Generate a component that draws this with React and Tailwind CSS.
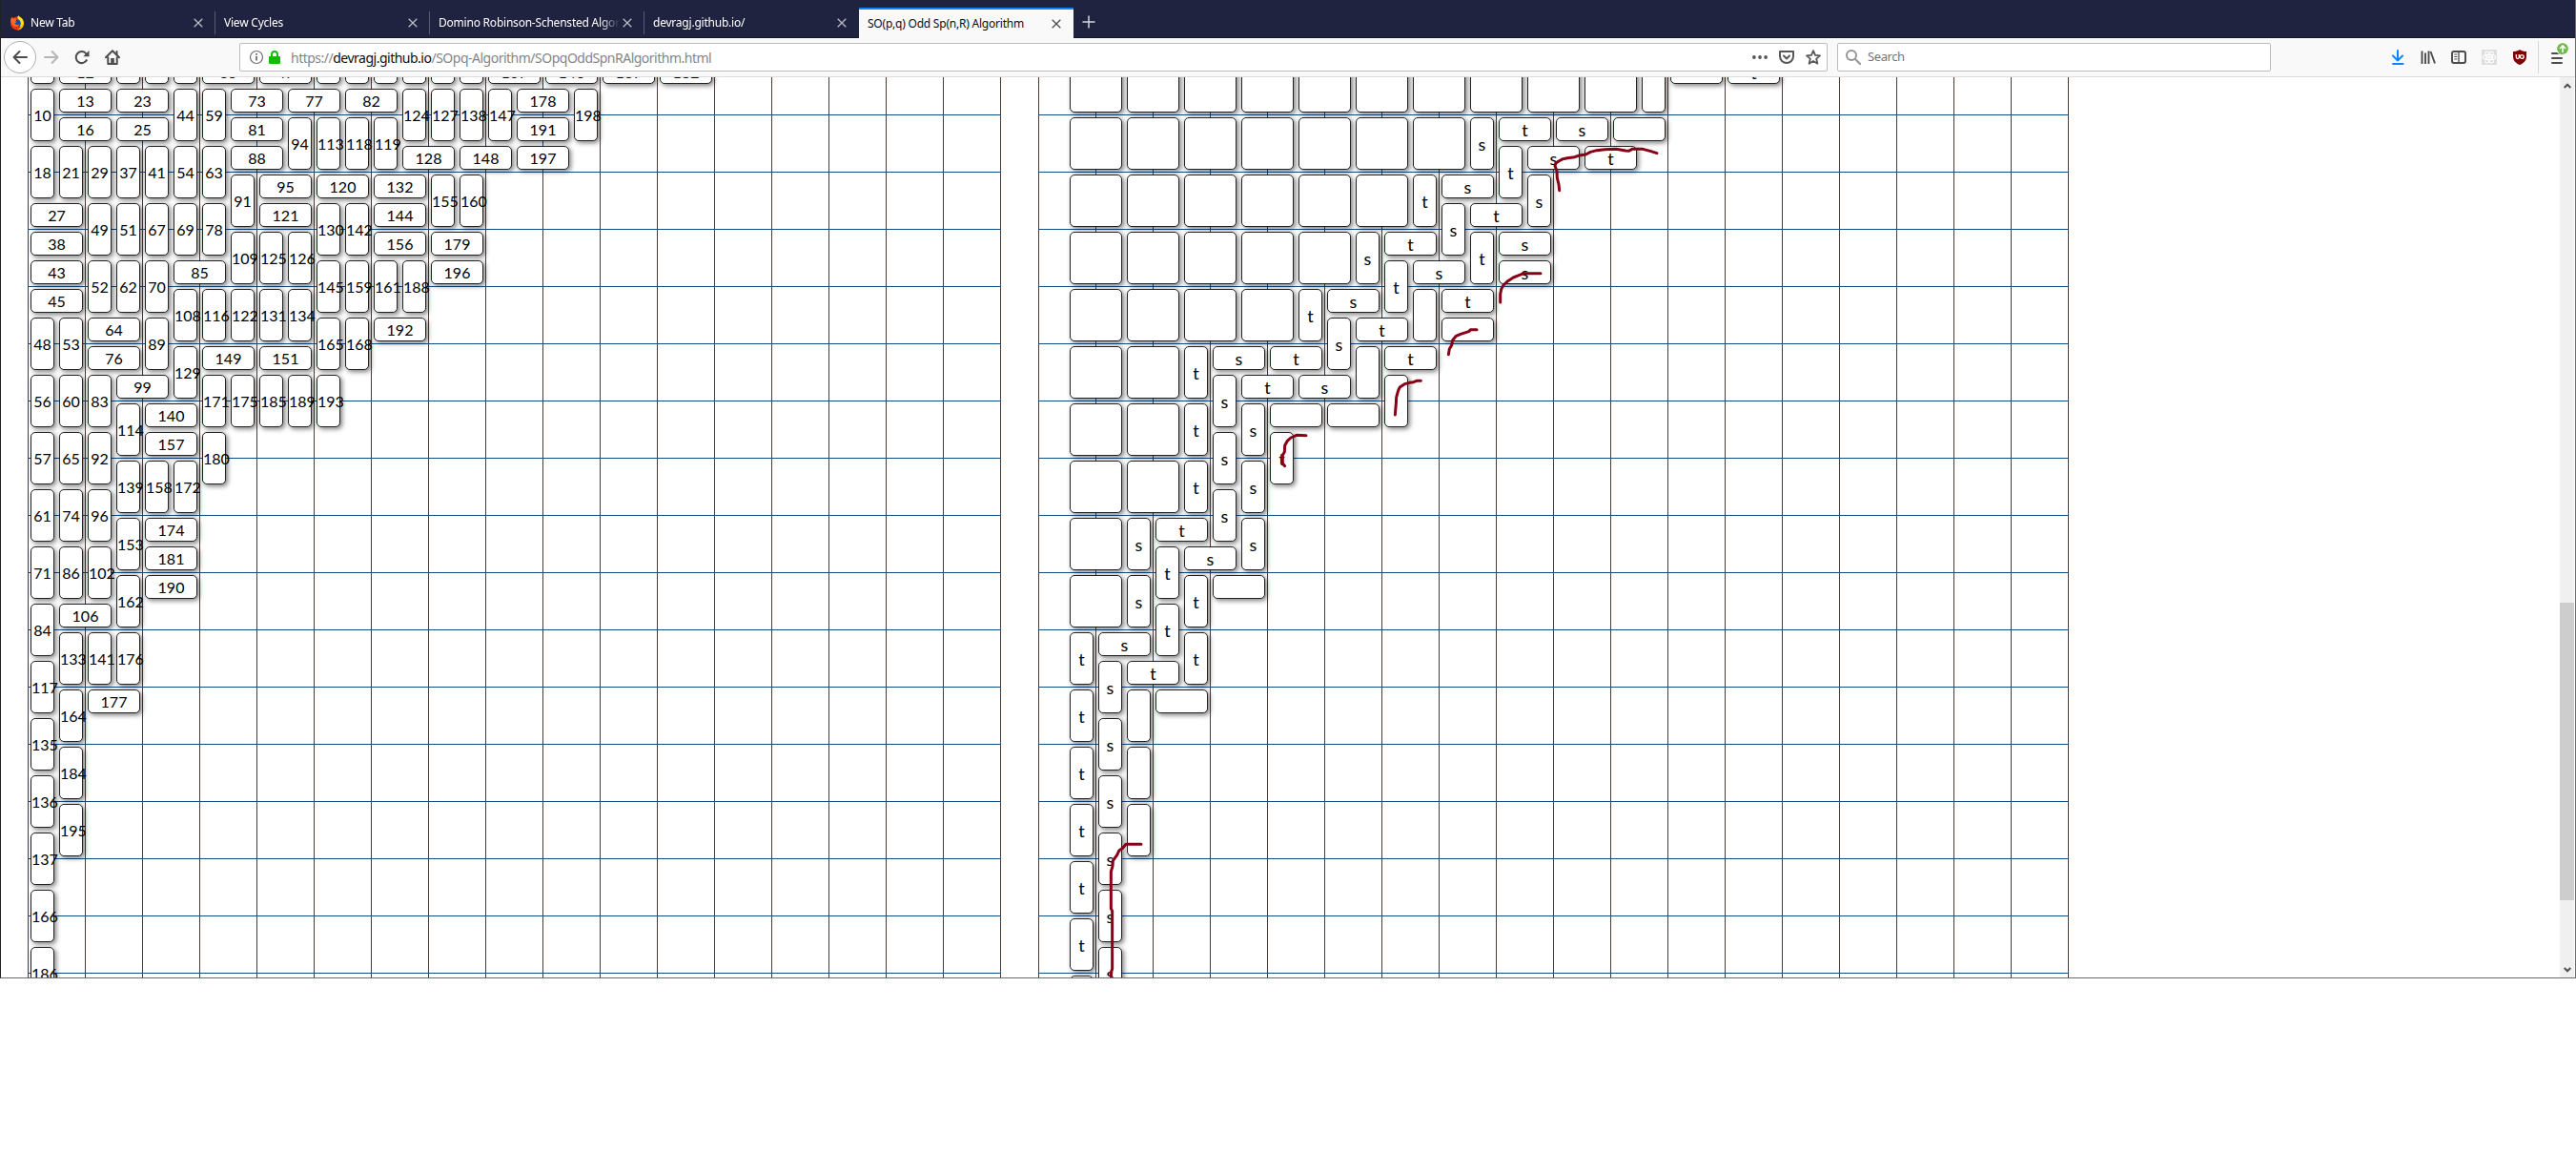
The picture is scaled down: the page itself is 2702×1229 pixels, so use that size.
import React from "react";

// Each tile is written "label,column,row"; rows and columns are in half-cell units.
const leftUpright = `,0,-2 ,3,-2 ,4,-2 ,5,-2 ,10,-2 ,11,-2 ,12,-2 ,13,-2 ,14,-2 ,15,-2
10,0,0 44,5,0 59,6,0 124,13,0 127,14,0 138,15,0 147,16,0 198,19,0
94,9,1 113,10,1 118,11,1 119,12,1
18,0,2 21,1,2 29,2,2 37,3,2 41,4,2 54,5,2 63,6,2
91,7,3 155,14,3 160,15,3
49,2,4 51,3,4 67,4,4 69,5,4 78,6,4 130,10,4 142,11,4
109,7,5 125,8,5 126,9,5
52,2,6 62,3,6 70,4,6 145,10,6 159,11,6 161,12,6 188,13,6
108,5,7 116,6,7 122,7,7 131,8,7 134,9,7
48,0,8 53,1,8 89,4,8 165,10,8 168,11,8 129,5,9
56,0,10 60,1,10 83,2,10 171,6,10 175,7,10 185,8,10 189,9,10 193,10,10
114,3,11 57,0,12 65,1,12 92,2,12 180,6,12
139,3,13 158,4,13 172,5,13 61,0,14 74,1,14 96,2,14 153,3,15
71,0,16 86,1,16 102,2,16 162,3,17 84,0,18
133,1,19 141,2,19 176,3,19 117,0,20 164,1,21 135,0,22 184,1,23
136,0,24 195,1,25 137,0,26 166,0,28 186,0,30`;

const leftFlat = `12,1,-1 35,6,-1 47,8,-1 107,16,-1 146,18,-1 167,20,-1 182,22,-1
13,1,0 23,3,0 73,7,0 77,9,0 82,11,0 178,17,0
16,1,1 25,3,1 81,7,1 191,17,1 88,7,2 128,13,2 148,15,2 197,17,2
95,8,3 120,10,3 132,12,3 27,0,4 121,8,4 144,12,4
38,0,5 156,12,5 179,14,5 43,0,6 85,5,6 196,14,6 45,0,7
64,2,8 192,12,8 76,2,9 149,6,9 151,8,9 99,3,10 140,4,11 157,4,12
174,4,15 181,4,16 190,4,17 106,1,18 177,2,21`;

const rightSquare = `,0,-1 ,2,-1 ,4,-1 ,6,-1 ,8,-1 ,10,-1 ,12,-1 ,14,-1 ,16,-1 ,18,-1
,0,1 ,2,1 ,4,1 ,6,1 ,8,1 ,10,1 ,12,1
,0,3 ,2,3 ,4,3 ,6,3 ,8,3 ,10,3
,0,5 ,2,5 ,4,5 ,6,5 ,8,5 ,0,7 ,2,7 ,4,7 ,6,7
,0,9 ,2,9 ,0,11 ,2,11 ,0,13 ,2,13 ,0,15 ,0,17`;

const rightUpright = `,20,-1 s,14,1 t,15,2 t,12,3 s,16,3 s,13,4 s,10,5 t,14,5 t,11,6
t,8,7 ,12,7 s,9,8 t,4,9 ,10,9 s,5,10 ,11,10 t,4,11 s,6,11 s,5,12 t,7,12
t,4,13 s,6,13 s,5,14 s,2,15 s,6,15 t,3,16 s,2,17 t,4,17 t,3,18
t,0,19 t,4,19 s,1,20 t,0,21 ,2,21 s,1,22 t,0,23 ,2,23 s,1,24 t,0,25 ,2,25
s,1,26 t,0,27 s,1,28 t,0,29 s,1,30 t,0,31`;

const rightFlat = `,21,-1 t,23,-1 t,15,1 s,17,1 ,19,1 s,16,2 t,18,2 s,13,3 t,14,4
t,11,5 s,15,5 s,12,6 s,15,6 s,9,7 t,13,7 t,10,8 ,13,8
s,5,9 t,7,9 t,11,9 t,6,10 s,8,10 ,7,11 ,9,11 t,3,15 s,4,16 ,5,17
s,1,19 t,2,20 ,3,21`;

const parse = (text, w, h) =>
  text.trim().split(/\s+/).map((item) => {
    const [label, c, r] = item.split(",");
    return { label, c: Number(c), r: Number(r), w, h };
  });

const leftTiles = [...parse(leftUpright, 1, 2), ...parse(leftFlat, 2, 1)];
const rightTiles = [
  ...parse(rightSquare, 2, 2),
  ...parse(rightUpright, 1, 2),
  ...parse(rightFlat, 2, 1),
];

function Board({ tiles, firstColumn, className }) {
  return (
    <div
      className={
        "-mt-[81px] grid h-[1110px] shrink-0 auto-cols-[30px] auto-rows-[30px] grid-cols-[repeat(34,30px)] grid-rows-[repeat(37,30px)] bg-[linear-gradient(#0f4c8c_1px,transparent_0),linear-gradient(90deg,#0f4c8c_1px,transparent_0)] bg-size-[60px_60px] " +
        className
      }
    >
      {tiles.map((t) => (
        <div
          key={t.c + "-" + t.r}
          className="mt-[3px] mr-[2px] mb-[2px] ml-[3px] flex items-center rounded-[5px] border border-[#222] bg-white shadow-[2px_2px_5px_rgba(0,0,0,0.5)]"
          style={{
            gridColumn: `${t.c + firstColumn} / span ${t.w}`,
            gridRow: `${t.r + 4} / span ${t.h}`,
          }}
        >
          <span className="mx-auto pt-px leading-[22px]">{t.label}</span>
        </div>
      ))}
    </div>
  );
}

function CloseIcon({ className }) {
  return (
    <svg viewBox="0 0 10 10" className={"size-2.5 shrink-0 " + className} fill="none" stroke="currentColor" strokeWidth="1.3">
      <path d="M.7.7l8.6 8.6M9.3.7L.7 9.3" />
    </svg>
  );
}

function FirefoxIcon() {
  return (
    <svg viewBox="0 0 16 16" className="mr-[6px] size-4 shrink-0">
      <circle cx="8" cy="8.6" r="7" fill="#e8311d" />
      <path d="M8 1.2c5 .2 7.4 4 7 7.8-.4 4-3.4 6.4-6.8 6.6 3-1.800 4.300-4.200 3.800-7.300C11.500 5.500 9.500 4 9 3.500z" fill="#ffb400" />
      <path d="M9.600 0c.2 2 5.400 3 4.700 9.300-.8 1.500-2 2.500-3.300 2.900 1.500-3.600.2-6-2.200-7.600C8.500 3 8.800 1 9.600 0z" fill="#ffe226" />
      <circle cx="7.700" cy="8.200" r="3.900" fill="#1b49a8" />
      <path d="M1.200 4.500l1.200-2.700 1.500 1.700c1.200-.4 2.700 0 3.600 1L6.300 6 7.200 7.300 5.400 8.300C6 10 8.300 10.600 10.600 9.500 9.500 12.500 5 13 3 10.200 1.700 8.500 1 6.500 1.200 4.500z" fill="#ff6a1a" />
    </svg>
  );
}

function Tab({ title, icon, divider }) {
  return (
    <div className="relative flex h-[31px] w-[225px] shrink-0 items-center pr-[13px] pl-[9px] text-white">
      {divider && <i className="absolute top-[4px] left-[-1px] h-6 w-px bg-[#5a5c72]" />}
      {icon}
      <span className="flex-1 overflow-hidden whitespace-nowrap [mask-image:linear-gradient(90deg,#000_calc(100%-20px),transparent)]">{title}</span>
      <CloseIcon className="ml-[3px] text-[#b9bac5]" />
    </div>
  );
}

const scrawl = [
  ["translate(1450 70) scale(.33333)", "M557 389L555 370 550 350 549 328 543 312 546 303 555 297 568 290 582 287 605 284 620 279 640 276 655 268 675 263 700 260 735 259 765 264 775 265 786 259 820 259 845 266 864 272"],
  ["translate(1450 70) scale(.33333)", "M371 741L371 715 374 700 381 687 395 674 412 663 430 656 445 650 498 650"],
  ["translate(1450 70) scale(.33333)", "M208 905L211 888 218 876 221 860 232 847 246 841 272 833 278 827 297 827"],
  ["translate(1450 70) scale(.33333)", "M40 1095L43 1060 44 1040 50 1018 55 1008 70 998 85 994 98 992 108 988 121 988"],
  ["translate(1080 70) scale(.33333)", "M803 1256L796 1248 796 1222 802 1212 803 1192 811 1177 822 1167 840 1159 870 1160"],
  ["translate(1080 560) scale(.33333)", "M351 976L303 976 293 988 282 995 275 1010 262 1028 261 1045 256 1062 256 1178 260 1186 260 1368 256 1380 257 1394"],
];

export default function App() {
  return (
    <div className="h-[1229px] w-[2702px] overflow-hidden bg-white">
      <div className="relative flex h-[1026px] flex-col border-r border-b border-l border-r-[#6b6b6b] border-b-[#6b6b6b] border-l-[#222] bg-white font-['Noto_Sans','Open_Sans',sans-serif]">
        <header className="flex h-10 shrink-0 items-end border-b border-[#15172f] bg-[#202340] text-[12px] tracking-[-0.22px]">
          <Tab title="New Tab" icon={<FirefoxIcon />} />
          <Tab title="View Cycles" divider />
          <Tab title="Domino Robinson-Schensted Algorithm" divider />
          <Tab title="devragj.github.io/" divider />
          <div className="-mb-px flex h-8 w-[225px] shrink-0 items-center border-t-2 border-[#0a84ff] bg-[#f9f9fa] pr-[13px] pl-[9px] text-[#0c0c0d]">
            <span className="flex-1 whitespace-nowrap">SO(p,q) Odd Sp(n,R) Algorithm</span>
            <CloseIcon className="text-[#4a4a4f]" />
          </div>
          <svg viewBox="0 0 14 14" className="mb-[9px] ml-[9px] size-3.5" stroke="#d5d5da" strokeWidth="1.500">
            <path d="M7 .5v13M.5 7h13" />
          </svg>
        </header>

        <div className="flex h-[41px] shrink-0 items-center border-b border-[#dcdcdc] bg-[#f9f9fa] text-[#4c4c4f]">
          <div className="ml-[3px] flex size-[34px] items-center justify-center rounded-full border border-[#b1b1b3] bg-white">
            <svg viewBox="0 0 16 16" className="size-4" fill="none" stroke="currentColor" strokeWidth="2" strokeLinecap="round" strokeLinejoin="round">
              <path d="M15 8H1.500M7.500 2L1.500 8l6 6" />
            </svg>
          </div>
          <svg viewBox="0 0 16 16" className="ml-2 size-4" fill="none" stroke="#b6b6b8" strokeWidth="2" strokeLinecap="round" strokeLinejoin="round">
            <path d="M1 8h13.500M8.500 2l6 6-6 6" />
          </svg>
          <svg viewBox="0 0 16 16" className="ml-4 size-4" fill="none" stroke="currentColor" strokeWidth="2">
            <path d="M13.200 10.500A6 6 0 1 1 12.500 4.500" />
            <path d="M15.500 1v6.200H9.300z" fill="currentColor" stroke="none" />
          </svg>
          <svg viewBox="0 0 16 16" className="ml-4 size-4" fill="none" stroke="currentColor" strokeWidth="2" strokeLinejoin="round" strokeLinecap="round">
            <path d="M1 8.300l7-7 7 7M3.300 8.500V15h9.400V8.500" />
            <path d="M12.500 2v3" />
            <path d="M6.200 9h3.600v6H6.200z" fill="currentColor" stroke="none" />
          </svg>

          <div className="ml-[125px] flex h-[30px] w-[1666px] items-center rounded-[2px] border border-[#bcbcbc] bg-white pr-[6px] pl-[9px] text-[14px]">
            <svg viewBox="0 0 16 16" className="size-4" fill="none" stroke="#6f6f72">
              <circle cx="8" cy="8" r="6.500" strokeWidth="1.200" />
              <path d="M8 7v4.500M8 4v1.700" strokeWidth="1.800" />
            </svg>
            <svg viewBox="0 0 12 14" className="ml-[5px] h-3.5 w-3">
              <path d="M3 7V4a3 3 0 0 1 6 0v3" fill="none" stroke="#12bc00" strokeWidth="2" />
              <rect y="6" width="12" height="8" rx="1" fill="#12bc00" />
            </svg>
            <span className="ml-[11px] w-[442px] pt-px whitespace-nowrap tracking-[-0.5px] text-[#858588]">
              https://<span className="text-[#0c0c0d]">devragj.github.io</span>/SOpq-Algorithm/SOpqOddSpnRAlgorithm.html
            </span>
            <div className="ml-auto flex items-center gap-3 text-[#58585b]">
              <svg viewBox="0 0 16 16" className="size-4" fill="currentColor">
                <circle cx="1.900" cy="8" r="1.900" /><circle cx="8" cy="8" r="1.900" /><circle cx="14.100" cy="8" r="1.900" />
              </svg>
              <svg viewBox="0 0 16 16" className="size-4" fill="none" stroke="currentColor" strokeWidth="2" strokeLinecap="round" strokeLinejoin="round">
                <path d="M1 2h14v5a7 7 0 0 1-14 0z" /><path d="M5 6.500l3 3 3-3" />
              </svg>
              <svg viewBox="0 0 16 16" className="size-4" fill="none" stroke="currentColor" strokeWidth="1.800" strokeLinejoin="round">
                <path d="M8 1.200l2 4.700 5 .4-3.800 3.400 1.200 5L8 12.100l-4.400 2.600 1.200-5L1 6.300l5-.4z" />
              </svg>
            </div>
          </div>

          <div className="ml-[10px] flex h-[30px] w-[455px] items-center rounded-[2px] border border-[#bcbcbc] bg-white pl-[8px] text-[13px] text-[#757578]">
            <svg viewBox="0 0 16 16" className="size-4" fill="none" stroke="#959598" strokeWidth="2">
              <circle cx="6" cy="6" r="5" /><path d="M9.700 9.700l6 6" />
            </svg>
            <span className="ml-[7px] tracking-[-0.400px]">Search</span>
          </div>

          <div className="ml-[125px] flex items-center gap-4">
            <svg viewBox="0 0 16 16" className="size-4" fill="none" stroke="#0a84ff" strokeWidth="2" strokeLinecap="round" strokeLinejoin="round">
              <path d="M8 1v10M3 6.500L8 11.500l5-5M3 15h10.500" />
            </svg>
            <svg viewBox="0 0 16 16" className="size-4" fill="none" stroke="currentColor" strokeWidth="1.900">
              <path d="M1.500 1.500V15M5 3.500V15M8.500 1.500V15M10.500 2l4.500 12.500" />
            </svg>
            <svg viewBox="0 0 16 16" className="size-4" fill="none" stroke="currentColor" strokeWidth="2">
              <rect x="1" y="2" width="14" height="12" rx="2" />
              <path d="M8 2v12" strokeWidth="1.300" /><path d="M3.300 5h3M3.300 7.500h3M3.300 10h3" strokeWidth="1" />
            </svg>
            <svg viewBox="0 0 16 16" className="size-4 bg-[#dedede]" fill="none" stroke="#fff" strokeWidth="1.100">
              <ellipse cx="8" cy="8" rx="6.700" ry="2.600" />
              <ellipse cx="8" cy="8" rx="6.700" ry="2.600" transform="rotate(60 8 8)" />
              <ellipse cx="8" cy="8" rx="6.700" ry="2.600" transform="rotate(120 8 8)" />
              <circle cx="8" cy="8" r="1" fill="#fff" />
            </svg>
            <svg viewBox="0 0 16 16" className="size-4">
              <path d="M8 0c2 1.500 4.500 2 7 2v5.500c0 4.500-3.500 7-7 8.500-3.500-1.500-7-4-7-8.500V2c2.500 0 5-.5 7-2z" fill="#800000" />
              <path d="M4.300 5v3a1.500 1.500 0 0 0 3 0V5" fill="none" stroke="#fff" strokeWidth="1.300" />
              <circle cx="10.300" cy="7.500" r="1.900" fill="none" stroke="#fff" strokeWidth="1.300" />
            </svg>
          </div>
          <i className="ml-[11px] h-[34px] w-px bg-[#d7d7db]" />
          <div className="relative ml-[13px] flex w-3 flex-col gap-[3px] pt-px">
            <i className="h-0.5 rounded bg-current" />
            <i className="h-0.5 rounded bg-current" />
            <i className="h-0.5 rounded bg-current" />
            <svg viewBox="0 0 12 12" className="absolute -top-[9px] left-[6px] size-3 rounded-full ring-1 ring-[#f9f9fa]" fill="none" stroke="#fff" strokeWidth="1.600">
              <circle cx="6" cy="6" r="6" fill="#6cbd45" stroke="none" />
              <path d="M6 10V3M3 6l3-3 3 3" />
            </svg>
          </div>
        </div>

        <main className="flex min-h-0 flex-1 items-start overflow-hidden font-[Lato,sans-serif] text-[16px] text-black">
          <Board tiles={leftTiles} firstColumn={1} className="ml-[28px] w-[1021px]" />
          <Board tiles={rightTiles} firstColumn={2} className="ml-[39px] w-[1081px] text-[18px]" />
          <aside className="mr-px ml-auto flex h-full w-[15px] shrink-0 flex-col items-center bg-[#f0f0f0]">
            <svg viewBox="0 0 8 6" className="mt-[6px] h-1.5 w-2 shrink-0" fill="none" stroke="#505050" strokeWidth="2">
              <path d="M.7 5L4 1.700 7.300 5" />
            </svg>
            <div className="mt-[539px] h-[312px] w-full bg-[#cdcdcd]" />
            <svg viewBox="0 0 8 6" className="mt-auto mb-[5px] h-1.5 w-2 shrink-0" fill="none" stroke="#505050" strokeWidth="2">
              <path d="M.7 1L4 4.300 7.300 1" />
            </svg>
          </aside>
        </main>

        <svg viewBox="0 0 2700 1025" className="pointer-events-none absolute top-0 left-0 h-[1025px] w-[2700px]" fill="none" stroke="#880015" strokeWidth="9" strokeLinecap="round" strokeLinejoin="round">
          <g transform="translate(-1 0)">
            {scrawl.map(([transform, d]) => (
              <path key={d} transform={transform} d={d} />
            ))}
          </g>
        </svg>
      </div>
    </div>
  );
}
